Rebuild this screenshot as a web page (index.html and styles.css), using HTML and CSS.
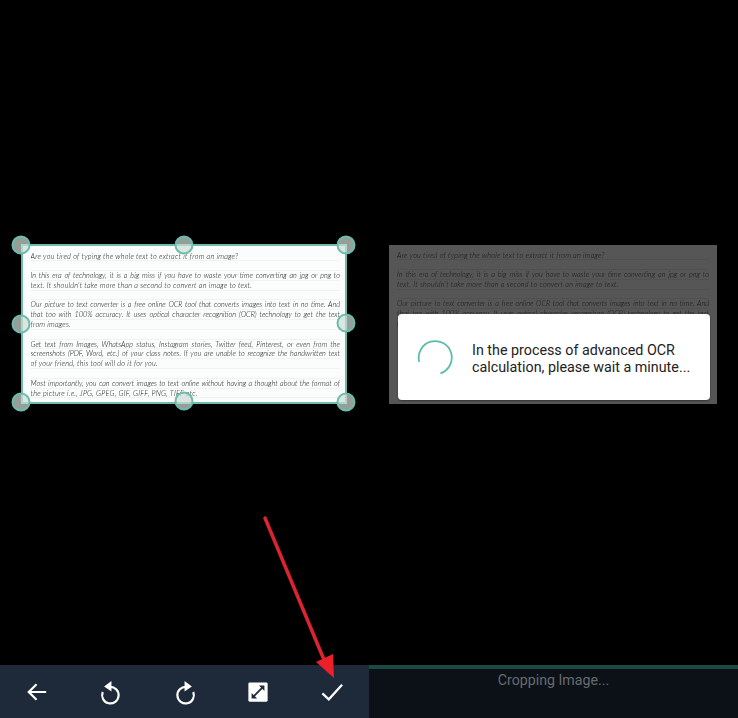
FILE: index.html
```html
<!DOCTYPE html>
<html lang="en">
<head>
<meta charset="utf-8">
<title>Crop and OCR</title>
<link rel="stylesheet" href="styles.css">
</head>
<body>
<main class="screens">
  <section class="panel">
    <div class="stage stage-crop">
      <div class="doc doc-crop">
        <div class="line">Are you tired of typing the whole text to extract it from an image?</div>
        <div class="line"></div>
        <div class="line full">In this era of technology, it is a big miss if you have to waste your time converting an jpg or png to</div>
        <div class="line">text. It shouldn't take more than a second to convert an image to text.</div>
        <div class="line"></div>
        <div class="line full">Our picture to text converter is a free online OCR tool that converts images into text in no time. And</div>
        <div class="line full">that too with 100% accuracy. It uses optical character recognition (OCR) technology to get the text</div>
        <div class="line">from images.</div>
        <div class="line"></div>
        <div class="line full">Get text from Images, WhatsApp status, Instagram stories, Twitter feed, Pinterest, or even from the</div>
        <div class="line full">screenshots (PDF, Word, etc.) of your class notes. If you are unable to recognize the handwritten text</div>
        <div class="line">of your friend, this tool will do it for you.</div>
        <div class="line"></div>
        <div class="line full">Most importantly, you can convert images to text online without having a thought about the format of</div>
        <div class="line">the picture i.e., JPG, GPEG, GIF, GIFF, PNG, TIFF etc.</div>
        <span class="handle h-tl"></span>
        <span class="handle h-tm"></span>
        <span class="handle h-tr"></span>
        <span class="handle h-ml"></span>
        <span class="handle h-mr"></span>
        <span class="handle h-bl"></span>
        <span class="handle h-bm"></span>
        <span class="handle h-br"></span>
      </div>
    </div>
    <nav class="toolbar">
      <svg class="icon" viewBox="0 0 24 24"><path d="M22 12H3.500M11.500 3.500 3 12l8.500 8.500"/></svg>
      <svg class="icon" viewBox="0 0 24 24"><path d="M10.500 6.500a9 9 0 1 1-7.500 5.500"/><path class="solid" d="M12.500 0v11.500L4.500 6z"/></svg>
      <svg class="icon" viewBox="0 0 24 24"><path d="M13.500 6.500a9 9 0 1 0 7.500 5.500"/><path class="solid" d="M11.500 0v11.500l8-5.500z"/></svg>
      <svg class="icon" viewBox="0 0 24 24"><rect class="solid" x="1.500" y="1.500" width="21" height="21" rx="1.500"/><path class="dark" d="M6.500 17.500 17.500 6.500"/><path class="dark-solid" d="M13 5h6v6zM11 19H5v-6z"/></svg>
      <svg class="icon" viewBox="0 0 24 24"><path d="M1.500 13.500 8.500 20 23 4"/></svg>
    </nav>
  </section>

  <section class="panel">
    <div class="stage stage-wait">
      <div class="doc doc-wait">
        <div class="line">Are you tired of typing the whole text to extract it from an image?</div>
        <div class="line"></div>
        <div class="line full">In this era of technology, it is a big miss if you have to waste your time converting an jpg or png to</div>
        <div class="line">text. It shouldn't take more than a second to convert an image to text.</div>
        <div class="line"></div>
        <div class="line full">Our picture to text converter is a free online OCR tool that converts images into text in no time. And</div>
        <div class="line full">that too with 100% accuracy. It uses optical character recognition (OCR) technology to get the text</div>
        <div class="line">from images.</div>
        <div class="dialog">
          <svg class="spinner" viewBox="0 0 38 38"><path d="M2.300 23.500A17 17 0 1 1 24 35.300"/></svg>
          <p class="dialog-text">In the process of advanced OCR calculation, please wait a minute...</p>
        </div>
      </div>
    </div>
    <footer class="status">
      <div class="progress"></div>
      <div class="status-text">Cropping Image...</div>
    </footer>
  </section>
</main>
<svg class="arrow" viewBox="0 0 738 718"><path class="shaft" d="M265 518 327 667"/><path class="head" d="M334 678 316 662 333 654z"/></svg>
</body>
</html>
```

FILE: styles.css
```css
* { box-sizing: border-box; }
html, body { margin: 0; height: 100%; background: #000; overflow: hidden; }
.screens { display: flex; height: 718px; }
.panel { width: 369px; display: flex; flex-direction: column; }
.stage { flex: 1; display: flex; align-items: flex-start; }
.stage-crop { padding: 244px 0 0 21px; }
.stage-wait { padding: 245px 0 0 20px; }

.doc { position: relative; font-family: "Lato", "Liberation Sans", sans-serif; font-style: italic; font-weight: 300; font-size: 7.300px; }
.doc-crop { width: 326px; height: 160px; padding: 5.500px 5px 0 7.500px; background: #fbfdfc; border: 2px solid #6cbcae; color: #0c0c0c; }
.doc-wait { width: 328px; height: 159px; padding: 5.500px 8px 0 8px; background: #565656; color: #141414; }
.line { height: 9.800px; line-height: 9.800px; white-space: nowrap; overflow: hidden; letter-spacing: 0.220px; border-bottom: 1px solid rgba(0, 0, 0, 0.04); filter: blur(0.3px); }
.line.full { white-space: normal; letter-spacing: 0; text-align: justify; text-align-last: justify; }
.doc-wait .line { border-bottom-color: rgba(0, 0, 0, 0.06); }

.handle { position: absolute; width: 19px; height: 19px; border-radius: 50%; background: rgba(205, 220, 214, 0.72); border: 2px solid #6cbcae; transform: translate(-50%, -50%); }
.h-tl { left: -2px; top: -1.500px; }
.h-tm { left: 50%; top: -1.500px; }
.h-tr { left: calc(100% + 1px); top: -1.500px; }
.h-ml { left: -2px; top: 50%; }
.h-mr { left: calc(100% + 1px); top: 49.500%; }
.h-bl { left: -2px; top: 100%; }
.h-bm { left: 50%; top: 99.500%; }
.h-br { left: calc(100% + 1px); top: 100%; }

.toolbar { height: 53px; background: #1e2a3a; display: flex; align-items: center; justify-content: space-between; padding: 0 26px 0 26px; }
.icon { width: 22px; height: 22px; overflow: visible; fill: none; stroke: #fff; stroke-width: 2.400; }
.icon .solid { fill: #fff; stroke: none; }
.icon .dark { stroke: #1e2a3a; stroke-width: 2; }
.icon .dark-solid { fill: #1e2a3a; stroke: none; }

.dialog { position: absolute; left: 9px; top: 69px; width: 312px; height: 86px; background: #fff; border-radius: 4px; display: flex; align-items: center; padding-left: 19px; gap: 18px; box-shadow: 0 1px 2px rgba(0, 0, 0, 0.4); font-style: normal; }
.spinner { width: 37px; height: 37px; flex: none; fill: none; stroke: #5bbbab; stroke-width: 1.800; }
.dialog-text { margin: 0; padding-top: 3px; width: 232px; font-family: "Roboto", "Liberation Sans", sans-serif; font-weight: 400; font-size: 14.300px; line-height: 17px; color: #222; }

.status { height: 53px; background: #0c1118; }
.progress { height: 4px; background: #1b4a45; }
.status-text { padding-top: 3px; text-align: center; font-family: "Roboto", "Liberation Sans", sans-serif; font-size: 14.200px; line-height: 17px; color: #666b6f; }

.arrow { position: absolute; left: 0; top: 0; width: 738px; height: 718px; pointer-events: none; }
.shaft { stroke: #dc2430; stroke-width: 3.500; stroke-linecap: round; fill: none; }
.head { fill: #ec1f2a; }
```
